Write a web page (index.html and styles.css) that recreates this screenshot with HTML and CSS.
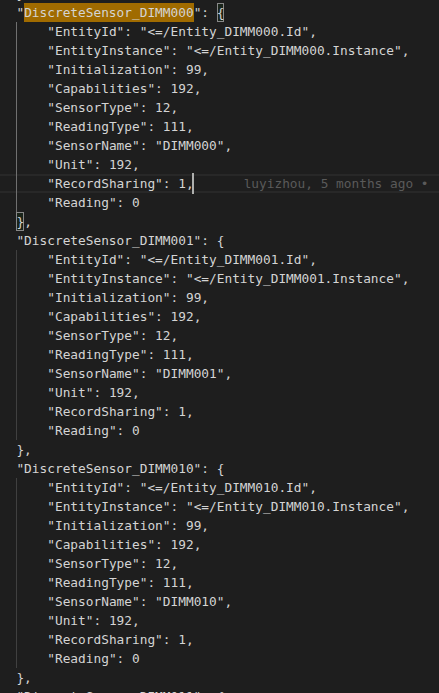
FILE: index.html
```html
<!DOCTYPE html>
<html>
<head>
<meta charset="utf-8">
<link rel="stylesheet" href="styles.css">
</head>
<body>
<div class="editor">
<div class="line">  },</div>
<div class="line">  "<span class="hl">DiscreteSensor_DIMM000</span>": <span class="bm">{</span></div>
<div class="line"><span class="ind">  </span><span class="g act">    </span>"EntityId": "&lt;=/Entity_DIMM000.Id",</div>
<div class="line"><span class="ind">  </span><span class="g act">    </span>"EntityInstance": "&lt;=/Entity_DIMM000.Instance",</div>
<div class="line"><span class="ind">  </span><span class="g act">    </span>"Initialization": 99,</div>
<div class="line"><span class="ind">  </span><span class="g act">    </span>"Capabilities": 192,</div>
<div class="line"><span class="ind">  </span><span class="g act">    </span>"SensorType": 12,</div>
<div class="line"><span class="ind">  </span><span class="g act">    </span>"ReadingType": 111,</div>
<div class="line"><span class="ind">  </span><span class="g act">    </span>"SensorName": "DIMM000",</div>
<div class="line"><span class="ind">  </span><span class="g act">    </span>"Unit": 192,</div>
<div class="line current"><span class="ind">  </span><span class="g act">    </span>"RecordSharing": 1,<span class="cursor"></span><span class="blame">luyizhou, 5 months ago •</span></div>
<div class="line"><span class="ind">  </span><span class="g act">    </span>"Reading": 0</div>
<div class="line">  <span class="bm">}</span>,</div>
<div class="line">  "DiscreteSensor_DIMM001": {</div>
<div class="line"><span class="ind">  </span><span class="g">    </span>"EntityId": "&lt;=/Entity_DIMM001.Id",</div>
<div class="line"><span class="ind">  </span><span class="g">    </span>"EntityInstance": "&lt;=/Entity_DIMM001.Instance",</div>
<div class="line"><span class="ind">  </span><span class="g">    </span>"Initialization": 99,</div>
<div class="line"><span class="ind">  </span><span class="g">    </span>"Capabilities": 192,</div>
<div class="line"><span class="ind">  </span><span class="g">    </span>"SensorType": 12,</div>
<div class="line"><span class="ind">  </span><span class="g">    </span>"ReadingType": 111,</div>
<div class="line"><span class="ind">  </span><span class="g">    </span>"SensorName": "DIMM001",</div>
<div class="line"><span class="ind">  </span><span class="g">    </span>"Unit": 192,</div>
<div class="line"><span class="ind">  </span><span class="g">    </span>"RecordSharing": 1,</div>
<div class="line"><span class="ind">  </span><span class="g">    </span>"Reading": 0</div>
<div class="line">  },</div>
<div class="line">  "DiscreteSensor_DIMM010": {</div>
<div class="line"><span class="ind">  </span><span class="g">    </span>"EntityId": "&lt;=/Entity_DIMM010.Id",</div>
<div class="line"><span class="ind">  </span><span class="g">    </span>"EntityInstance": "&lt;=/Entity_DIMM010.Instance",</div>
<div class="line"><span class="ind">  </span><span class="g">    </span>"Initialization": 99,</div>
<div class="line"><span class="ind">  </span><span class="g">    </span>"Capabilities": 192,</div>
<div class="line"><span class="ind">  </span><span class="g">    </span>"SensorType": 12,</div>
<div class="line"><span class="ind">  </span><span class="g">    </span>"ReadingType": 111,</div>
<div class="line"><span class="ind">  </span><span class="g">    </span>"SensorName": "DIMM010",</div>
<div class="line"><span class="ind">  </span><span class="g">    </span>"Unit": 192,</div>
<div class="line"><span class="ind">  </span><span class="g">    </span>"RecordSharing": 1,</div>
<div class="line"><span class="ind">  </span><span class="g">    </span>"Reading": 0</div>
<div class="line">  },</div>
<div class="line">  "DiscreteSensor_DIMM011": {</div>
</div>
</body>
</html>
```
FILE: styles.css
```css
html, body {
  margin: 0;
  padding: 0;
  background: #1e1e1e;
  overflow: hidden;
  height: 100%;
}

.editor {
  margin-top: -16.5px;
  padding-left: 1px;
  font-family: "DejaVu Sans Mono", "Liberation Mono", monospace;
  font-size: 12.8px;
  line-height: 19px;
  color: #d4d4d4;
}

.line {
  position: relative;
  height: 19px;
  white-space: pre;
}

.current {
  box-shadow: inset 0 2px 0 #282828, inset 0 -2px 0 #282828;
  margin-left: -1px;
  padding-left: 1px;
}

.g {
  display: inline-block;
  height: 19px;
  vertical-align: top;
  box-shadow: inset 1px 0 0 #404040;
}

.g.act {
  box-shadow: inset 1px 0 0 #707070;
}

.hl {
  display: inline-block;
  height: 19px;
  vertical-align: top;
  background: #a06b00;
}

.bm {
  display: inline-block;
  height: 19px;
  vertical-align: top;
  box-sizing: border-box;
  box-shadow: inset 0 0 0 1px #888888;
  background: rgba(0, 100, 0, 0.1);
}

.cursor {
  display: inline-block;
  width: 0;
  height: 19px;
  vertical-align: top;
  box-shadow: -1px 0 0 1px #aeafad;
  margin-left: 0;
}

.blame {
  margin-left: 50px;
  color: #5a5a5a;
}
```
